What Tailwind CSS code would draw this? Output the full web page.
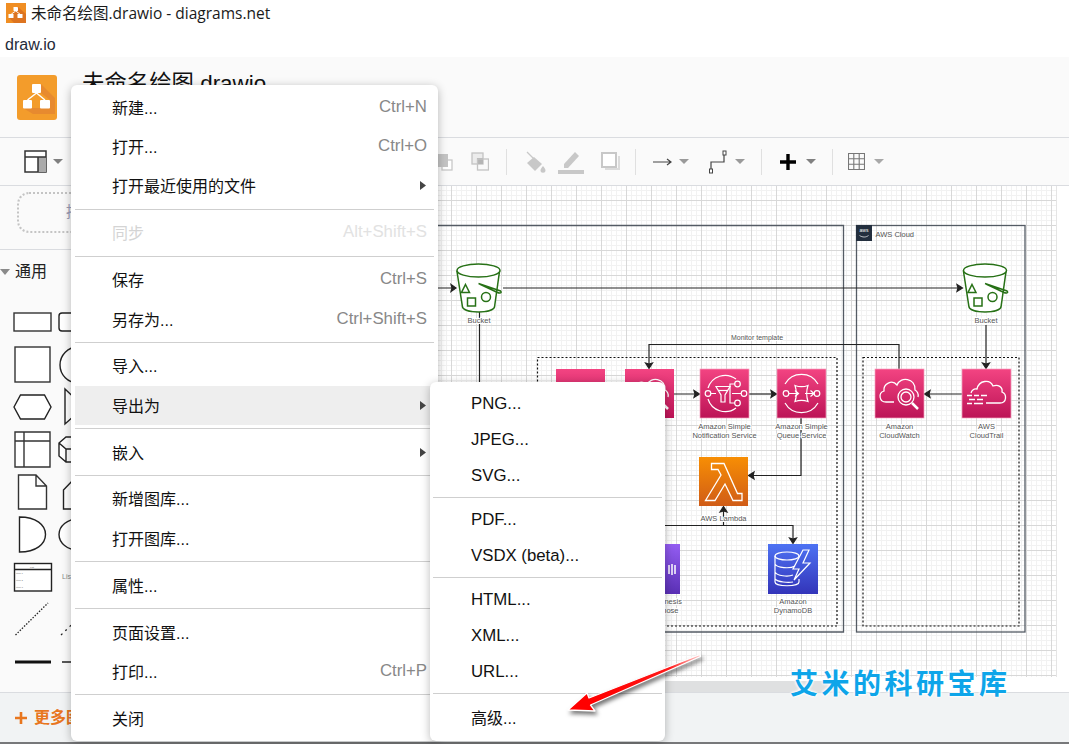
<!DOCTYPE html>
<html lang="zh-CN">
<head>
<meta charset="utf-8">
<title>未命名绘图.drawio - diagrams.net</title>
<script src="https://cdn.jsdelivr.net/npm/@tailwindcss/browser@4"></script>
</head>
<body class="bg-white">
<div class="relative w-[1069px] h-[744px] overflow-hidden flex flex-col bg-white text-[#111] font-['Liberation_Sans','Noto_Sans_CJK_SC',sans-serif]">

  <!-- window title -->
  <div class="h-[30px] flex items-start shrink-0 pl-[6px]">
    <svg width="20" height="20" viewBox="0 0 40 45" preserveAspectRatio="none" class="shrink-0 mt-[3px]"><rect width="40" height="45" fill="#f08e23"/><path d="M24 9 40 25V45H16L6 33Z" fill="#dd7420"/><path d="M19.500 18 10.500 25M19.500 18 28 25" stroke="#fff" stroke-width="2"/><rect x="15" y="9" width="9" height="9" rx="1" fill="#fff"/><rect x="5" y="25" width="10" height="9" rx="1" fill="#fff"/><rect x="23" y="25" width="10" height="9" rx="1" fill="#fff"/></svg>
    <span class="ml-[5px] mt-[6px] text-[15.5px] leading-none text-[#1a1a1a] font-['Open_Sans','Noto_Sans_CJK_SC',sans-serif]">未命名绘图.drawio - diagrams.net</span>
  </div>
  <div class="h-[27px] shrink-0 pl-[5px] flex items-center text-[16px] leading-none text-[#1f2b3a] pt-[3px]">draw.io</div>

  <!-- app header -->
  <div class="h-[81px] shrink-0 flex items-start bg-[#fafafa] border-b border-[#dadce0]">
    <svg width="40" height="45" viewBox="0 0 40 45" class="ml-[17px] mt-[18px] shrink-0"><rect width="40" height="45" rx="3" fill="#f39c2b"/><path d="M24 9 38 23V39H16L6 33H33V25L24 18Z" fill="#e78a2f"/><path d="M19.500 18 10.500 25M19.500 18 28 25" stroke="#fff" stroke-width="1.500"/><rect x="15" y="9" width="9" height="9" rx="1" fill="#fff"/><rect x="6" y="25" width="9" height="8.500" rx="1" fill="#fff"/><rect x="23" y="25" width="10" height="8.500" rx="1" fill="#fff"/></svg>
    <div class="ml-[25px] mt-[12px] text-[22.4px] leading-[30px] text-[#111]">未命名绘图.drawio</div>
  </div>

  <!-- toolbar -->
  <div class="h-[48px] shrink-0 flex items-center bg-[#fafafa] border-b border-[#dadce0]">
    <svg width="23" height="23" viewBox="0 0 23 23" class="ml-[24px] shrink-0"><rect x="1" y="1" width="21" height="21" fill="#fff" stroke="#333" stroke-width="1.500"/><rect x="14" y="7" width="8" height="15" fill="#aaa"/><path d="M1 7H22M14 7V22" stroke="#333" stroke-width="1.500" fill="none"/></svg>
    <svg width="10" height="5" viewBox="0 0 10 5" class="ml-[6px] shrink-0"><path d="M0 0H10L5 5Z" fill="#808080"/></svg>
    <!-- to front / to back -->
    <svg width="19" height="19" viewBox="0 0 19 19" class="ml-[371px] shrink-0"><rect x="8" y="8" width="10" height="10" fill="#fff" stroke="#c8c8c8" stroke-width="1.300"/><rect x="1" y="2" width="13" height="13" fill="#c4c4c4"/></svg>
    <svg width="18" height="19" viewBox="0 0 18 19" class="ml-[18px] shrink-0"><rect x="1" y="1" width="11" height="11" fill="#ececec" stroke="#c4c4c4" stroke-width="1.300"/><rect x="6" y="6" width="6" height="6" fill="#b5b5b5"/><rect x="6.500" y="7" width="11" height="11" fill="none" stroke="#c4c4c4" stroke-width="1.300"/></svg>
    <div class="ml-[17px] w-px h-[26px] bg-[#e0e0e0] shrink-0"></div>
    <svg width="22" height="22" viewBox="0 0 22 22" class="ml-[17px] shrink-0"><path d="M10 6 18 13 11 20 3 12Z" fill="#c8c8c8"/><path d="M3 1 11 9" stroke="#c8c8c8" stroke-width="1.300" fill="none"/><path d="M19 15c1.500 2 2.500 3.200 2.500 4.300a2.500 2.500 0 0 1-5 0C16.500 18.200 17.500 17 19 15Z" fill="#c8c8c8"/></svg>
    <svg width="26" height="26" viewBox="0 0 26 26" class="ml-[12px] shrink-0"><path d="M6 15 17 3l4 4-11 12H6Z" fill="#c8c8c8"/><rect y="21" width="26" height="4" fill="#c8c8c8"/></svg>
    <svg width="19" height="19" viewBox="0 0 19 19" class="ml-[17px] shrink-0"><rect x="1" y="1" width="14" height="14" fill="#fff" stroke="#c8c8c8" stroke-width="2"/><path d="M4 17H18V4" fill="none" stroke="#dcdcdc" stroke-width="2"/></svg>
    <div class="ml-[15px] w-px h-[26px] bg-[#e0e0e0] shrink-0"></div>
    <svg width="20" height="10" viewBox="0 0 20 10" class="ml-[17px] shrink-0"><path d="M0 5H17M14 2l4 3-4 3" fill="none" stroke="#444" stroke-width="1.200"/></svg>
    <svg width="10" height="5" viewBox="0 0 10 5" class="ml-[6px] shrink-0"><path d="M0 0H10L5 5Z" fill="#9a9a9a"/></svg>
    <svg width="19" height="24" viewBox="0 0 19 24" class="ml-[20px] shrink-0"><path d="M2 19V12H15V3" fill="none" stroke="#444" stroke-width="1.200"/><rect x=".5" y="19" width="3" height="4" fill="#fff" stroke="#444"/><rect x="14" y="1" width="3" height="4" fill="#fff" stroke="#444"/></svg>
    <svg width="10" height="5" viewBox="0 0 10 5" class="ml-[7px] shrink-0"><path d="M0 0H10L5 5Z" fill="#9a9a9a"/></svg>
    <div class="ml-[16px] w-px h-[26px] bg-[#e0e0e0] shrink-0"></div>
    <svg width="16" height="16" viewBox="0 0 16 16" class="ml-[18px] shrink-0"><path d="M6.300 0h3.400v6.300H16v3.400H9.700V16H6.300V9.700H0V6.300h6.300Z" fill="#000"/></svg>
    <svg width="10" height="5" viewBox="0 0 10 5" class="ml-[10px] shrink-0"><path d="M0 0H10L5 5Z" fill="#808080"/></svg>
    <div class="ml-[16px] w-px h-[26px] bg-[#e0e0e0] shrink-0"></div>
    <svg width="17" height="17" viewBox="0 0 17 17" class="ml-[15px] shrink-0"><path d="M.5.5h16v16H.500ZM.5 5.800h16M.5 11.200h16M5.800.5v16M11.200.5v16" fill="none" stroke="#777" stroke-width="1.100"/></svg>
    <svg width="10" height="5" viewBox="0 0 10 5" class="ml-[9px] shrink-0"><path d="M0 0H10L5 5Z" fill="#a8a8a8"/></svg>
  </div>

  <!-- body -->
  <div class="h-[506px] shrink-0 flex">
    <!-- sidebar -->
    <div class="w-[240px] shrink-0 flex flex-col bg-[#fafafa]">
      <div class="h-[64px] shrink-0 border-b border-[#dadce0] pt-[6px] pl-[17px]">
        <div class="h-[41px] w-[206px] rounded-[12px] border-2 border-dotted border-[#c4c4c4] flex items-center pl-[47px] text-[15px] text-[#9b9bb5]">拖动元素至此处</div>
      </div>
      <div class="h-[45px] shrink-0 flex items-center pb-[2px]">
        <svg width="10" height="6" viewBox="0 0 10 6" class="shrink-0"><path d="M0 0H10L5 6Z" fill="#8a8a8a"/></svg>
        <span class="ml-[5px] text-[16px] leading-none text-[#222]">通用</span>
      </div>
      <svg width="240" height="397" viewBox="0 295 240 397" class="shrink-0" fill="none" stroke="#222" stroke-width="1.400">
        <rect x="14" y="313" width="37" height="18" fill="#fff" stroke="#333"/>
        <rect x="59" y="313" width="37" height="18" rx="3" fill="#fff"/>
        <rect x="15" y="347" width="35" height="35" fill="#fff" stroke="#333"/>
        <circle cx="78" cy="365" r="18" fill="#fff"/>
        <path d="M14 407 20.500 395H44.500L51 407 44.500 419H20.500Z" fill="#fff"/>
        <path d="M65 389 84 407 65 424Z" fill="#fff"/>
        <path d="M15 432H50V467H15ZM15 441H50M24 432V467" fill="#fff" stroke="#333"/>
        <path d="M59 443 66 437H90V462H66L59 456ZM59 443 66 449H90M66 449V462" fill="#fff"/>
        <path d="M18.500 475H36L46.500 486V509H18.500ZM36 475V486H46.500" fill="#fff" stroke="#333"/>
        <path d="M63.500 490 75 478H92V509H63.500Z" fill="#fff"/>
        <path d="M19.500 517C36 517 45.500 525 45.500 534.500 45.500 544 36 552 19.500 552Z" fill="#fff"/>
        <ellipse cx="78" cy="534.500" rx="19" ry="15.500" fill="#fff"/>
        <rect x="14.500" y="563.500" width="37" height="27.500" fill="#fff" stroke="#222"/>
        <path d="M14.500 569.500H51.500" stroke="#222" stroke-width="1.500"/>
        <text x="32" y="568" font-size="2.500" text-anchor="middle" fill="#666" stroke="none">List</text>
        <text x="16" y="574" font-size="2.500" fill="#777" stroke="none">Item 1</text>
        <text x="16" y="581" font-size="2.500" fill="#777" stroke="none">Item 2</text>
        <text x="16" y="588" font-size="2.500" fill="#777" stroke="none">Item 3</text>
        <text x="62" y="579" font-size="7" fill="#888" stroke="none">List</text>
        <path d="M15.500 635 48 603" stroke-dasharray="1.500 1.500" stroke-width="1.300"/>
        <path d="M61 635 94 603" stroke-dasharray="2 4" stroke-width="1.300"/>
        <path d="M15 662H51" stroke-width="3" stroke="#111"/>
        <path d="M62 662H96" stroke-width="1.500"/>
      </svg>
    </div>

    <!-- canvas -->
    <div class="w-[829px] shrink-0 flex flex-col bg-white">
      <div class="h-[491px] shrink-0 flex">
        <div class="relative w-[816px] h-[491px] shrink-0 bg-white bg-[linear-gradient(to_right,#d8d8d8_1px,transparent_1px),linear-gradient(to_bottom,#d8d8d8_1px,transparent_1px),linear-gradient(to_right,#f2f2f2_1px,transparent_1px),linear-gradient(to_bottom,#f2f2f2_1px,transparent_1px)] bg-[size:25px_25px,25px_25px,5px_5px,5px_5px] bg-[position:11px_14px,11px_14px,1px_4px,1px_4px]">
          <svg width="829" height="491" viewBox="240 186 829 491" class="absolute left-0 top-0 overflow-visible" fill="none">
            <defs>
              <linearGradient id="pk" x1="0" y1="0" x2="0" y2="1"><stop offset="0" stop-color="#f34482"/><stop offset="1" stop-color="#bc1356"/></linearGradient>
              <linearGradient id="or" x1="0" y1="0" x2="0" y2="1"><stop offset="0" stop-color="#f78e04"/><stop offset="1" stop-color="#d05c17"/></linearGradient>
              <linearGradient id="bl" x1="0" y1="0" x2="0" y2="1"><stop offset="0" stop-color="#4d72f3"/><stop offset="1" stop-color="#3334b9"/></linearGradient>
              <linearGradient id="pu" x1="0" y1="0" x2="0" y2="1"><stop offset="0" stop-color="#945df2"/><stop offset="1" stop-color="#5a30b5"/></linearGradient>
              <g id="bucket" stroke="#277116" stroke-width="1.500" fill="#fff">
                <path d="M-21.500 7.500-16 43C-14 49.500 14 49.500 16 43L21 7.500Z"/>
                <ellipse cx="0" cy="6.500" rx="21.500" ry="6.500"/>
                <path d="M-13 20.500-9 28.500H-17Z" fill="none"/>
                <rect x="-11" y="34" width="8" height="8" fill="none"/>
                <circle cx="7.500" cy="33" r="4.500" fill="none"/>
                <path d="M0 19.500 22 27c2 2-1 2.500-3 1.500L1 20" fill="none"/>
              </g>
              <g id="cw" stroke="#fff" stroke-width="1.300" fill="none">
                <path d="M19 33H11C4 33 3 24 9 22 8 15 17 10 22 16 25 7 41 9 40 21 42 22 44 25 43 28"/>
                <circle cx="31" cy="28" r="8"/><circle cx="31" cy="28" r="5"/>
                <path d="M37 34 43 40" stroke-width="2.500"/>
              </g>
            </defs>

            <!-- AWS cloud groups -->
            <path d="M240 225.500H843.500V632H240" stroke="#545b64" stroke-width="1.300"/>
            <rect x="856.500" y="225.500" width="168.500" height="406.500" stroke="#545b64" stroke-width="1.300"/>
            <rect x="856" y="225" width="16" height="16" fill="#232f3e"/>
            <text x="864" y="232" font-size="5" text-anchor="middle" fill="#fff">aws</text>
            <path d="M859.500 235.500c3 2 6.500 2 9 0" stroke="#fff" stroke-width=".7"/>
            <text x="875.500" y="236.500" font-size="7.500" fill="#555">AWS Cloud</text>
            <rect x="537.500" y="357.500" width="299.500" height="268.500" stroke="#111" stroke-width="1.200" stroke-dasharray="2 2"/>
            <rect x="863" y="357.500" width="156" height="268.500" stroke="#111" stroke-width="1.200" stroke-dasharray="2 2"/>

            <!-- connectors -->
            <g stroke="#222" stroke-width="1.200">
              <path d="M240 288H455"/><path d="M451 284.500 456 288 451 291.500 452 288Z" fill="#222"/>
              <path d="M503 288H962"/><path d="M957 284.500 962.500 288 957 291.500 958 288Z" fill="#222"/>
              <path d="M479.500 312V400"/>
              <path d="M986 325V368"/><path d="M982.500 363 986 368.500 989.500 363 986 364Z" fill="#222"/>
              <path d="M899 369V344.500H649V368"/><path d="M645.500 363 649 368.500 652.500 363 649 364Z" fill="#222"/>
              <path d="M605 394H625M674 394H699"/><path d="M694 390.500 699.500 394 694 397.500 695 394Z" fill="#222"/>
              <path d="M749 394H776"/><path d="M771 390.500 776.500 394 771 397.500 772 394Z" fill="#222"/>
              <path d="M962 394H925"/><path d="M930 390.500 924.500 394 930 397.500 929 394Z" fill="#222"/>
              <path d="M801 418V475.500H749"/><path d="M754 472 748.500 475.500 754 479 753 475.500Z" fill="#222"/>
              <path d="M560 525.500H793V543"/><path d="M789.500 538 793 543.500 796.500 538 793 539Z" fill="#222"/>
              <path d="M723.500 525.500V507"/><path d="M720 512 723.500 506.500 727 512 723.500 511Z" fill="#222"/>
            </g>

            <!-- buckets -->
            <use href="#bucket" x="478.500" y="264"/>
            <use href="#bucket" x="985" y="264"/>

            <!-- tiles -->
            <rect x="556" y="369" width="49" height="49" fill="url(#pk)"/>
            <rect x="625" y="369" width="49" height="49" fill="url(#pk)"/>
            <g transform="translate(625 369)"><use href="#cw"/></g>

            <g transform="translate(700 369)">
              <rect width="49" height="49" fill="url(#pk)" stroke="#f5a3c0" stroke-width=".7"/>
              <g stroke="#fff" stroke-width="1.200">
                <path d="M8 19A18 18 0 0 1 36 10M36 39A18 18 0 0 1 8 30"/>
                <circle cx="8" cy="24.500" r="2.800"/><circle cx="37.500" cy="15" r="2.800"/><circle cx="44" cy="24.500" r="2.800"/><circle cx="37.500" cy="34" r="2.800"/>
                <path d="M11 24.500H16M32 24.500H41M30 24.500V15H35M30 24.500V34H35"/>
                <path d="M16 17.500H30L25 26V33H21V26Z"/><path d="M18 21.500H28"/>
              </g>
            </g>
            <text x="724.500" y="429" font-size="7.500" text-anchor="middle" fill="#555" paint-order="stroke" stroke="#fff" stroke-width="2">Amazon Simple</text>
            <text x="724.500" y="438" font-size="7.500" text-anchor="middle" fill="#555" paint-order="stroke" stroke="#fff" stroke-width="2">Notification Service</text>

            <g transform="translate(777 369)">
              <rect width="49" height="49" fill="url(#pk)" stroke="#f5a3c0" stroke-width=".7"/>
              <g stroke="#fff" stroke-width="1.200">
                <path d="M8 15A19 19 0 0 1 41 15M41 34A19 19 0 0 1 8 34"/>
                <circle cx="9" cy="24.500" r="2.800"/><circle cx="40" cy="24.500" r="2.800"/>
                <path d="M18 16.500C22 18 27 18 31 16.500 29.500 21 29.500 28 31 32.500 27 31 22 31 18 32.500 19.500 28 19.500 21 18 16.500Z"/>
                <path d="M12 24.500H21M18 21.500 21.500 24.500 18 27.500M28 24.500H37M33.500 21.500 37 24.500 33.500 27.500"/>
              </g>
            </g>
            <text x="801.500" y="429" font-size="7.500" text-anchor="middle" fill="#555" paint-order="stroke" stroke="#fff" stroke-width="2">Amazon Simple</text>
            <text x="801.500" y="438" font-size="7.500" text-anchor="middle" fill="#555" paint-order="stroke" stroke="#fff" stroke-width="2">Queue Service</text>

            <g transform="translate(875 369)">
              <rect width="49" height="49" fill="url(#pk)" stroke="#f5a3c0" stroke-width=".7"/>
              <use href="#cw"/>
            </g>
            <text x="899.500" y="429" font-size="7.500" text-anchor="middle" fill="#555" paint-order="stroke" stroke="#fff" stroke-width="2">Amazon</text>
            <text x="899.500" y="438" font-size="7.500" text-anchor="middle" fill="#555" paint-order="stroke" stroke="#fff" stroke-width="2">CloudWatch</text>

            <g transform="translate(962 369)">
              <rect width="49" height="49" fill="url(#pk)" stroke="#f5a3c0" stroke-width=".7"/>
              <g stroke="#fff" stroke-width="1.300">
                <path d="M9 24C10 21 12 19.500 15 20 17 11 28 10 31 17 36 15 41 18 40 23 45 25 45 34 38 34H24"/>
                <path d="M5 26.500H10M12 26.500H17M19 26.500H25M7 30.500H13M15 30.500H21M5 34.500H10M12 34.500H21" stroke-width="1.500"/>
              </g>
            </g>
            <text x="986.500" y="429" font-size="7.500" text-anchor="middle" fill="#555" paint-order="stroke" stroke="#fff" stroke-width="2">AWS</text>
            <text x="986.500" y="438" font-size="7.500" text-anchor="middle" fill="#555" paint-order="stroke" stroke="#fff" stroke-width="2">CloudTrail</text>

            <g transform="translate(699 457)">
              <rect width="49" height="49" fill="url(#or)"/>
              <path d="M12.500 6.500V12.500H19L22 18 6.500 43.500H16L26 27 34 43.500H43V36.500H38.500L25 6.500Z" stroke="#fff" stroke-width="1.300"/>
            </g>
            <text x="723.500" y="521" font-size="7.500" text-anchor="middle" fill="#555" paint-order="stroke" stroke="#fff" stroke-width="2">AWS Lambda</text>

            <g transform="translate(631 544)">
              <rect width="49" height="50" fill="url(#pu)"/>
              <path d="M38 21V30M41 20V31M44 21V30" stroke="#fff" stroke-width="1.500"/>
            </g>
            <text x="655" y="604" font-size="7.500" text-anchor="middle" fill="#555" paint-order="stroke" stroke="#fff" stroke-width="2">Amazon Kinesis</text>
            <text x="655" y="613" font-size="7.500" text-anchor="middle" fill="#555" paint-order="stroke" stroke="#fff" stroke-width="2">Data Firehose</text>

            <g transform="translate(768 544)">
              <rect width="50" height="50" fill="url(#bl)"/>
              <g stroke="#fff" stroke-width="1.200">
                <ellipse cx="19" cy="12" rx="12" ry="4"/>
                <path d="M7 12V38C7 43 31 43 31 38V35M7 20C9 24 22 25 27 22M7 28C9 32 20 33 25 31M7 35C10 38 20 39 25 38"/>
                <path d="M35 6 25 25H31L26 36 42 19H35L41 6Z"/>
              </g>
            </g>
            <text x="793" y="604" font-size="7.500" text-anchor="middle" fill="#555" paint-order="stroke" stroke="#fff" stroke-width="2">Amazon</text>
            <text x="793" y="613" font-size="7.500" text-anchor="middle" fill="#555" paint-order="stroke" stroke="#fff" stroke-width="2">DynamoDB</text>

            <text x="479" y="323" font-size="7.500" text-anchor="middle" fill="#555" paint-order="stroke" stroke="#fff" stroke-width="2">Bucket</text>
            <text x="986" y="323" font-size="7.500" text-anchor="middle" fill="#555" paint-order="stroke" stroke="#fff" stroke-width="2">Bucket</text>
            <text x="757" y="340" font-size="7" text-anchor="middle" fill="#555" paint-order="stroke" stroke="#fff" stroke-width="2">Monitor template</text>
          </svg>
        </div>
        <div class="flex-1 border-l border-[#e5e5e5] bg-white"></div>
      </div>
      <div class="h-[15px] shrink-0 flex items-end">
        <div class="ml-[400px] w-[200px] h-[11px] bg-[#dfe0e1]"></div>
      </div>
    </div>
  </div>

  <!-- footer -->
  <div class="h-[50px] shrink-0 bg-[#f1f3f4] border-t border-[#dadce0] flex items-center pl-[15px] text-[#e8761e] font-bold">
    <svg width="12" height="12" viewBox="0 0 12 12" class="shrink-0"><path d="M4.700 0h2.600v4.700H12v2.600H7.300V12H4.700V7.300H0V4.700h4.700Z" fill="#e8761e"/></svg>
    <span class="ml-[7px] text-[16px] leading-none">更多图形</span>
  </div>
  <div class="h-[2px] shrink-0 bg-[#77787a]"></div>

  <!-- main menu -->
  <div class="absolute left-[71px] top-[85px] w-[367px] h-[656px] bg-white rounded-[6px] shadow-[0_2px_10px_rgba(0,0,0,0.28)] pt-[2.7px] px-[4px] text-[16px] leading-none text-[#111]">
    <div class="h-[39.3px] flex items-center justify-between pl-[37px] pr-[7px]"><span class="pt-[3px]">新建...</span><span class="text-[16.8px] text-[#888]">Ctrl+N</span></div>
    <div class="h-[39.3px] flex items-center justify-between pl-[37px] pr-[7px]"><span class="pt-[3px]">打开...</span><span class="text-[16.8px] text-[#888]">Ctrl+O</span></div>
    <div class="h-[39.3px] flex items-center justify-between pl-[37px] pr-[8px]"><span class="pt-[3px]">打开最近使用的文件</span><svg width="6" height="9" viewBox="0 0 6 9"><path d="M0 0 6 4.500 0 9Z" fill="#444"/></svg></div>
    <div class="h-[7.6px] flex items-center"><div class="w-full h-px bg-[#cfcfcf]"></div></div>
    <div class="h-[39.3px] flex items-center justify-between pl-[37px] pr-[7px] text-[#d4d4d4]"><span class="pt-[3px]">同步</span><span class="text-[16.8px] text-[#e2e2e2]">Alt+Shift+S</span></div>
    <div class="h-[7.6px] flex items-center"><div class="w-full h-px bg-[#cfcfcf]"></div></div>
    <div class="h-[39.3px] flex items-center justify-between pl-[37px] pr-[7px]"><span class="pt-[3px]">保存</span><span class="text-[16.8px] text-[#888]">Ctrl+S</span></div>
    <div class="h-[39.3px] flex items-center justify-between pl-[37px] pr-[7px]"><span class="pt-[3px]">另存为...</span><span class="text-[16.8px] text-[#888]">Ctrl+Shift+S</span></div>
    <div class="h-[7.6px] flex items-center"><div class="w-full h-px bg-[#cfcfcf]"></div></div>
    <div class="h-[39.3px] flex items-center pl-[37px]"><span class="pt-[3px]">导入...</span></div>
    <div class="h-[39.3px] flex items-center justify-between pl-[37px] pr-[8px] bg-[#eeeeee]"><span class="pt-[3px]">导出为</span><svg width="6" height="9" viewBox="0 0 6 9"><path d="M0 0 6 4.500 0 9Z" fill="#444"/></svg></div>
    <div class="h-[7.6px] flex items-center"><div class="w-full h-px bg-[#cfcfcf]"></div></div>
    <div class="h-[39.3px] flex items-center justify-between pl-[37px] pr-[8px]"><span class="pt-[3px]">嵌入</span><svg width="6" height="9" viewBox="0 0 6 9"><path d="M0 0 6 4.500 0 9Z" fill="#444"/></svg></div>
    <div class="h-[7.6px] flex items-center"><div class="w-full h-px bg-[#cfcfcf]"></div></div>
    <div class="h-[39.3px] flex items-center pl-[37px]"><span class="pt-[3px]">新增图库...</span></div>
    <div class="h-[39.3px] flex items-center pl-[37px]"><span class="pt-[3px]">打开图库...</span></div>
    <div class="h-[7.6px] flex items-center"><div class="w-full h-px bg-[#cfcfcf]"></div></div>
    <div class="h-[39.3px] flex items-center pl-[37px]"><span class="pt-[3px]">属性...</span></div>
    <div class="h-[7.6px] flex items-center"><div class="w-full h-px bg-[#cfcfcf]"></div></div>
    <div class="h-[39.3px] flex items-center pl-[37px]"><span class="pt-[3px]">页面设置...</span></div>
    <div class="h-[39.3px] flex items-center justify-between pl-[37px] pr-[7px]"><span class="pt-[3px]">打印...</span><span class="text-[16.8px] text-[#888]">Ctrl+P</span></div>
    <div class="h-[7.6px] flex items-center"><div class="w-full h-px bg-[#cfcfcf]"></div></div>
    <div class="h-[39.3px] flex items-center pl-[37px]"><span class="pt-[3px]">关闭</span></div>
  </div>

  <!-- submenu -->
  <div class="absolute left-[430px] top-[382px] w-[235px] h-[359px] bg-white rounded-[6px] shadow-[0_2px_10px_rgba(0,0,0,0.28)] pt-[3px] px-[3px] text-[16.8px] leading-none text-[#111]">
    <div class="h-[36px] flex items-center pl-[38px] pt-[2px]">PNG...</div>
    <div class="h-[36px] flex items-center pl-[38px] pt-[2px]">JPEG...</div>
    <div class="h-[36px] flex items-center pl-[38px] pt-[2px]">SVG...</div>
    <div class="h-[8px] flex items-center"><div class="w-full h-px bg-[#cfcfcf]"></div></div>
    <div class="h-[36px] flex items-center pl-[38px] pt-[2px]">PDF...</div>
    <div class="h-[36px] flex items-center pl-[38px] pt-[2px]">VSDX (beta)...</div>
    <div class="h-[8px] flex items-center"><div class="w-full h-px bg-[#cfcfcf]"></div></div>
    <div class="h-[36px] flex items-center pl-[38px] pt-[2px]">HTML...</div>
    <div class="h-[36px] flex items-center pl-[38px] pt-[2px]">XML...</div>
    <div class="h-[36px] flex items-center pl-[38px] pt-[2px]">URL...</div>
    <div class="h-[8px] flex items-center"><div class="w-full h-px bg-[#cfcfcf]"></div></div>
    <div class="h-[42px] flex items-center pl-[38px] pt-[2px] text-[16px]">高级...</div>
  </div>

  <!-- annotation arrow -->
  <svg width="150" height="80" viewBox="560 645 150 80" class="absolute left-[560px] top-[645px] overflow-visible drop-shadow-[2px_3px_2px_rgba(0,0,0,0.55)]" fill="none">
    <defs>
      <linearGradient id="ra" gradientUnits="userSpaceOnUse" x1="700" y1="655" x2="600" y2="700"><stop offset="0" stop-color="#ffd0d0"/><stop offset=".3" stop-color="#ff1a1a"/><stop offset="1" stop-color="#ff0000"/></linearGradient>
    </defs>
    <path d="M700 654.500 589 698 587 693 568 710 595 711 590.500 705 700.500 656.500Z" fill="url(#ra)" stroke="#fff" stroke-width="1.300" stroke-linejoin="round"/>
  </svg>

  <!-- watermark -->
  <div class="absolute left-[790px] top-[665px] text-[28px] leading-[34px] tracking-[3.500px] font-bold text-[#0ea5e9] whitespace-nowrap font-['Noto_Sans_CJK_SC',sans-serif] [text-shadow:0_0_3px_#fff,0_0_3px_#fff,0_0_3px_#fff]">艾米的科研宝库</div>
</div>
</body>
</html>
